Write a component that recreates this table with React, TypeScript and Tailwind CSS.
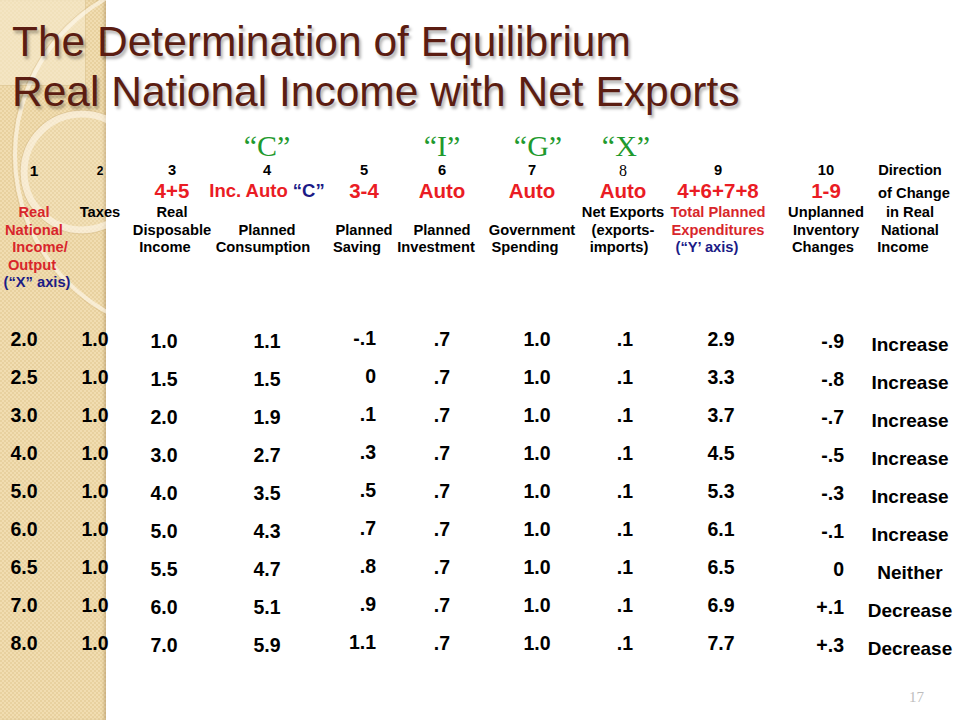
const COLS =
  "grid grid-cols-[68px_64px_80px_110px_84px_72px_108px_74px_116px_100px_68px]";

const RED = "text-[#ea1c24]";
const DARKRED = "text-[#d8262b]";
const NAVY = "text-[#1b1b86]";

type Line = { t: string; c?: string; s?: string };

// header label lines, one array per column (5 lines of 17.5px)
const labels: Line[][] = [
  [
    { t: "Real", c: DARKRED },
    { t: "National", c: DARKRED },
    { t: "Income/", c: DARKRED, s: "ml-[12px]" },
    { t: "Output", c: DARKRED, s: "mr-[4px]" },
    { t: "(“X” axis)", c: NAVY, s: "ml-[6px]" },
  ],
  [{ t: "Taxes" }],
  [{ t: "Real" }, { t: "Disposable" }, { t: "Income", s: "mr-[14px]" }],
  [{ t: "" }, { t: "Planned" }, { t: "Consumption", s: "mr-[8px]" }],
  [{ t: "" }, { t: "Planned" }, { t: "Saving", s: "mr-[14px]" }],
  [{ t: "" }, { t: "Planned" }, { t: "Investment", s: "mr-[12px]" }],
  [{ t: "" }, { t: "Government" }, { t: "Spending", s: "mr-[14px]" }],
  [{ t: "Net Exports" }, { t: "(exports-" }, { t: "imports)", s: "mr-[8px]" }],
  [
    { t: "Total Planned", c: DARKRED },
    { t: "Expenditures", c: DARKRED },
    { t: "(“Y’ axis)", c: NAVY, s: "mr-[22px]" },
  ],
  [{ t: "Unplanned" }, { t: "Inventory" }, { t: "Changes", s: "mr-[6px]" }],
  [{ t: "in Real" }, { t: "National" }, { t: "Income", s: "mr-[14px]" }],
];

const rows = [
  ["2.0", "1.0", "1.0", "1.1", "-.1", ".7", "1.0", ".1", "2.9", "-.9", "Increase"],
  ["2.5", "1.0", "1.5", "1.5", "0", ".7", "1.0", ".1", "3.3", "-.8", "Increase"],
  ["3.0", "1.0", "2.0", "1.9", ".1", ".7", "1.0", ".1", "3.7", "-.7", "Increase"],
  ["4.0", "1.0", "3.0", "2.7", ".3", ".7", "1.0", ".1", "4.5", "-.5", "Increase"],
  ["5.0", "1.0", "4.0", "3.5", ".5", ".7", "1.0", ".1", "5.3", "-.3", "Increase"],
  ["6.0", "1.0", "5.0", "4.3", ".7", ".7", "1.0", ".1", "6.1", "-.1", "Increase"],
  ["6.5", "1.0", "5.5", "4.7", ".8", ".7", "1.0", ".1", "6.5", "0", "Neither"],
  ["7.0", "1.0", "6.0", "5.1", ".9", ".7", "1.0", ".1", "6.9", "+.1", "Decrease"],
  ["8.0", "1.0", "7.0", "5.9", "1.1", ".7", "1.0", ".1", "7.7", "+.3", "Decrease"],
];

// per column placement of the data values
const valueCell = [
  "justify-center pr-[20px]",
  "justify-center pr-[10px]",
  "justify-center pr-[16px] pt-[4px]",
  "justify-center pt-[4px]",
  "justify-end pr-[30px] pb-[2px]",
  "justify-center",
  "justify-center pl-[10px]",
  "justify-center pl-[4px]",
  "justify-center pl-[6px]",
  "justify-end pr-[32px] pt-[4px]",
  "justify-center pt-[8px] text-[19px]",
];

function Strip() {
  return (
    <div className="absolute left-0 top-0 h-full w-[106px] overflow-hidden bg-[#eed8a7] bg-[repeating-conic-gradient(#f1ddb1_0_25%,#e8d19f_0_50%)] bg-[length:4px_4px] shadow-[inset_-3px_0_3px_-1px_rgba(140,110,60,0.35)]">
      <div className="h-[86px] w-[86px] border-b border-r border-[#e2cc9c] bg-[#f7ebcf]/60" />
      <svg className="absolute left-0 top-0" width="106" height="720">
        <circle cx="195" cy="155" r="180" fill="none" stroke="#fffaf0" strokeOpacity="0.6" strokeWidth="4" />
        <circle cx="195" cy="155" r="183" fill="none" stroke="#c9ad78" strokeOpacity="0.35" strokeWidth="1" />
        <circle cx="82" cy="172" r="58" fill="#fff8ea" fillOpacity="0.12" stroke="#fffaf0" strokeOpacity="0.55" strokeWidth="7" />
        <circle cx="82" cy="172" r="62" fill="none" stroke="#c6aa75" strokeOpacity="0.35" strokeWidth="1" />
      </svg>
    </div>
  );
}

export default function App() {
  return (
    <div className="relative h-[720px] w-[960px] overflow-hidden bg-white font-['Liberation_Sans',Arial,sans-serif] text-black">
      <Strip />

      <div className="relative flex flex-col">
        {/* Title */}
        <div className="pl-[12px] pt-[17px] text-[42.5px] leading-[50px] text-[#5b1d12] [text-shadow:2px_3px_3px_rgba(0,0,0,0.3)]">
          <div>The Determination of Equilibrium</div>
          <div>Real National Income with Net Exports</div>
        </div>

        {/* quoted letters */}
        <div className={`${COLS} mt-[13px] h-[32px] items-start pt-[3px] font-['Liberation_Serif',serif] text-[30px] leading-[26px] text-[#1f9a2e]`}>
          <div />
          <div />
          <div />
          <div className="flex justify-center">“C”</div>
          <div />
          <div className="flex justify-center">“I”</div>
          <div className="flex justify-center pl-[12px]">“G”</div>
          <div className="flex justify-center pl-[6px]">“X”</div>
        </div>

        {/* column numbers */}
        <div className={`${COLS} h-[17px] items-center text-[14.7px] font-bold leading-none`}>
          <div className="flex justify-center text-[15.5px]">1</div>
          <div className="flex justify-center text-[12px]">2</div>
          <div className="flex justify-center">3</div>
          <div className="flex justify-center">4</div>
          <div className="flex justify-center">5</div>
          <div className="flex justify-center">6</div>
          <div className="flex justify-center">7</div>
          <div className="flex justify-center font-['Liberation_Serif',serif] text-[16px] font-normal">8</div>
          <div className="flex justify-center">9</div>
          <div className="flex justify-center">10</div>
          <div className="flex justify-center whitespace-nowrap">Direction</div>
        </div>

        {/* formulas */}
        <div className={`${COLS} h-[25px] items-center whitespace-nowrap text-[20.5px] font-bold leading-none ${RED}`}>
          <div />
          <div />
          <div className="flex justify-center">4+5</div>
          <div className="flex justify-center text-[18.5px]">
            Inc. Auto&nbsp;<span className={NAVY}>“C”</span>
          </div>
          <div className="flex justify-center">3-4</div>
          <div className="flex justify-center">Auto</div>
          <div className="flex justify-center">Auto</div>
          <div className="flex justify-center">Auto</div>
          <div className="flex justify-center">4+6+7+8</div>
          <div className="flex justify-center">1-9</div>
          <div className="flex justify-center pl-[8px] pt-[4px] text-[14.7px] text-black">of Change</div>
        </div>

        {/* labels */}
        <div className={`${COLS} h-[87.5px] text-[14.7px] font-bold leading-[17.5px]`}>
          {labels.map((col, i) => (
            <div key={i} className="flex flex-col items-center">
              {col.map((l, j) => (
                <div key={j} className={`h-[17.5px] whitespace-nowrap ${l.c ?? ""} ${l.s ?? ""}`}>
                  {l.t}
                </div>
              ))}
            </div>
          ))}
        </div>

        {/* data */}
        <div className="mt-[29.5px] flex flex-col text-[19.5px] font-bold leading-none">
          {rows.map((r, i) => (
            <div key={i} className={`${COLS} h-[38px]`}>
              {r.map((v, j) => (
                <div key={j} className={`flex items-center whitespace-nowrap ${valueCell[j]}`}>
                  {v}
                </div>
              ))}
            </div>
          ))}
        </div>

        <div className="mt-[25px] flex justify-end pr-[36px] font-['Liberation_Serif',serif] text-[15px] leading-[18px] text-[#bdbdbd]">
          17
        </div>
      </div>
    </div>
  );
}
